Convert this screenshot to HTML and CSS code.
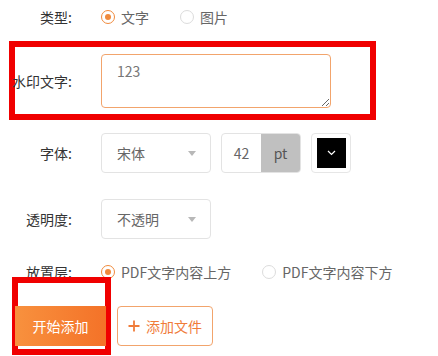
FILE: index.html
```html
<!DOCTYPE html>
<html lang="zh-CN">
<head>
<meta charset="utf-8">
<title>水印设置</title>
<link rel="stylesheet" href="styles.css">
</head>
<body>
<div class="form">
  <div class="row row-type">
    <div class="label">类型:</div>
    <div class="options">
      <label class="option"><span class="radio checked"></span><span>文字</span></label>
      <label class="option"><span class="radio"></span><span>图片</span></label>
    </div>
  </div>

  <div class="row boxed">
    <div class="label">水印文字:</div>
    <textarea class="textarea">123</textarea>
  </div>

  <div class="row row-font">
    <div class="label">字体:</div>
    <div class="select"><span>宋体</span><span class="caret"></span></div>
    <div class="size">
      <span class="size-value">42</span>
      <span class="size-unit">pt</span>
    </div>
    <div class="color">
      <div class="swatch">
        <svg width="9" height="6" viewBox="0 0 9 6"><path d="M1 1 L4.5 4.5 L8 1" fill="none" stroke="#fff" stroke-width="1.2"/></svg>
      </div>
    </div>
  </div>

  <div class="row row-opacity">
    <div class="label">透明度:</div>
    <div class="select"><span>不透明</span><span class="caret"></span></div>
  </div>

  <div class="row row-layer">
    <div class="label">放置层:</div>
    <div class="options">
      <label class="option"><span class="radio checked"></span><span>PDF文字内容上方</span></label>
      <label class="option"><span class="radio"></span><span>PDF文字内容下方</span></label>
    </div>
  </div>

  <div class="actions">
    <div class="mark"></div>
    <button class="btn btn-primary">开始添加</button>
    <button class="btn btn-outline">
      <svg width="12" height="12" viewBox="0 0 12 12"><path d="M6 0.5 V11.5 M0.5 6 H11.5" stroke="#f07c3a" stroke-width="1.8"/></svg>
      <span>添加文件</span>
    </button>
  </div>
</div>
</body>
</html>
```

FILE: styles.css
```css
html, body {
  margin: 0;
  padding: 0;
  background: #fff;
}
body {
  width: 438px;
  height: 356px;
  overflow: hidden;
  font-family: "Noto Sans CJK SC", "Noto Sans", sans-serif;
  font-size: 14px;
  color: #333;
}
.form {
  display: flex;
  flex-direction: column;
}
.row {
  display: flex;
  align-items: center;
  gap: 29px;
}
.label {
  width: 72px;
  flex-shrink: 0;
  display: flex;
  justify-content: flex-end;
  white-space: nowrap;
  color: #333;
  line-height: 20px;
}
.row-type {
  height: 34px;
}
.options {
  display: flex;
  align-items: center;
  gap: 31px;
}
.option {
  display: flex;
  align-items: center;
  gap: 6px;
  color: #666;
  line-height: 20px;
}
.radio {
  width: 14px;
  height: 14px;
  box-sizing: border-box;
  border: 1px solid #dcdcdc;
  border-radius: 50%;
  display: flex;
  align-items: center;
  justify-content: center;
  background: #fff;
}
.radio.checked {
  border-color: #f08a3c;
}
.radio.checked::after {
  content: "";
  width: 6px;
  height: 6px;
  border-radius: 50%;
  background: #f08a3c;
}
.boxed {
  margin: 7px 0 0 9px;
  width: 367px;
  height: 79px;
  box-sizing: border-box;
  border: 6px solid #f00000;
}
.boxed .label {
  width: 57px;
}
.textarea {
  width: 230px;
  height: 54px;
  box-sizing: border-box;
  margin: 0;
  border: 1px solid #f2a46c;
  border-radius: 4px;
  padding: 6px 15px;
  font-family: "Noto Sans CJK SC", "Noto Sans", sans-serif;
  font-size: 14px;
  line-height: 20px;
  color: #777;
  outline: none;
  resize: vertical;
}
.row-font {
  margin-top: 13px;
  height: 40px;
}
.row-font .select {
  margin-right: -19px;
}
.select {
  width: 110px;
  height: 40px;
  box-sizing: border-box;
  border: 1px solid #e3e3e3;
  border-radius: 4px;
  display: flex;
  align-items: center;
  justify-content: space-between;
  padding: 0 14px 0 15px;
  color: #666;
}
.caret {
  width: 0;
  height: 0;
  border-left: 4px solid transparent;
  border-right: 4px solid transparent;
  border-top: 5px solid #b8b8b8;
}
.size {
  display: flex;
  height: 40px;
  width: 80px;
  box-sizing: border-box;
  border: 1px solid #e3e3e3;
  border-radius: 4px;
  overflow: hidden;
  margin-right: -19px;
}
.size-value {
  width: 39px;
  display: flex;
  align-items: center;
  justify-content: center;
  color: #666;
}
.size-unit {
  flex: 1;
  background: #c0c0c0;
  display: flex;
  align-items: center;
  justify-content: center;
  color: #555;
}
.color {
  width: 40px;
  height: 40px;
  box-sizing: border-box;
  border: 1px solid #e6e6e6;
  border-radius: 4px;
  display: flex;
  align-items: center;
  justify-content: center;
}
.swatch {
  width: 29px;
  height: 30px;
  background: #000;
  display: flex;
  align-items: center;
  justify-content: center;
}
.row-opacity {
  margin-top: 26px;
  height: 40px;
}
.row-layer {
  margin-top: 23px;
  height: 20px;
}
.actions {
  position: relative;
  margin-top: 24px;
  padding-left: 15px;
  display: flex;
  gap: 11px;
}
.mark {
  position: absolute;
  left: 12px;
  top: -29px;
  width: 99px;
  height: 78px;
  box-sizing: border-box;
  border: 6px solid #f00000;
}
.btn {
  height: 40px;
  box-sizing: border-box;
  margin: 0;
  font-family: "Noto Sans CJK SC", "Noto Sans", sans-serif;
  font-size: 14px;
  border-radius: 4px;
  display: flex;
  align-items: center;
  justify-content: center;
  gap: 6px;
}
.btn-primary {
  position: relative;
  width: 91px;
  border: none;
  border-radius: 0;
  color: #fff;
  background: linear-gradient(90deg, #f8913e, #f47228);
}
.btn-outline {
  width: 96px;
  border: 1px solid #f2a46c;
  background: #fff;
  color: #f07c3a;
}
```
